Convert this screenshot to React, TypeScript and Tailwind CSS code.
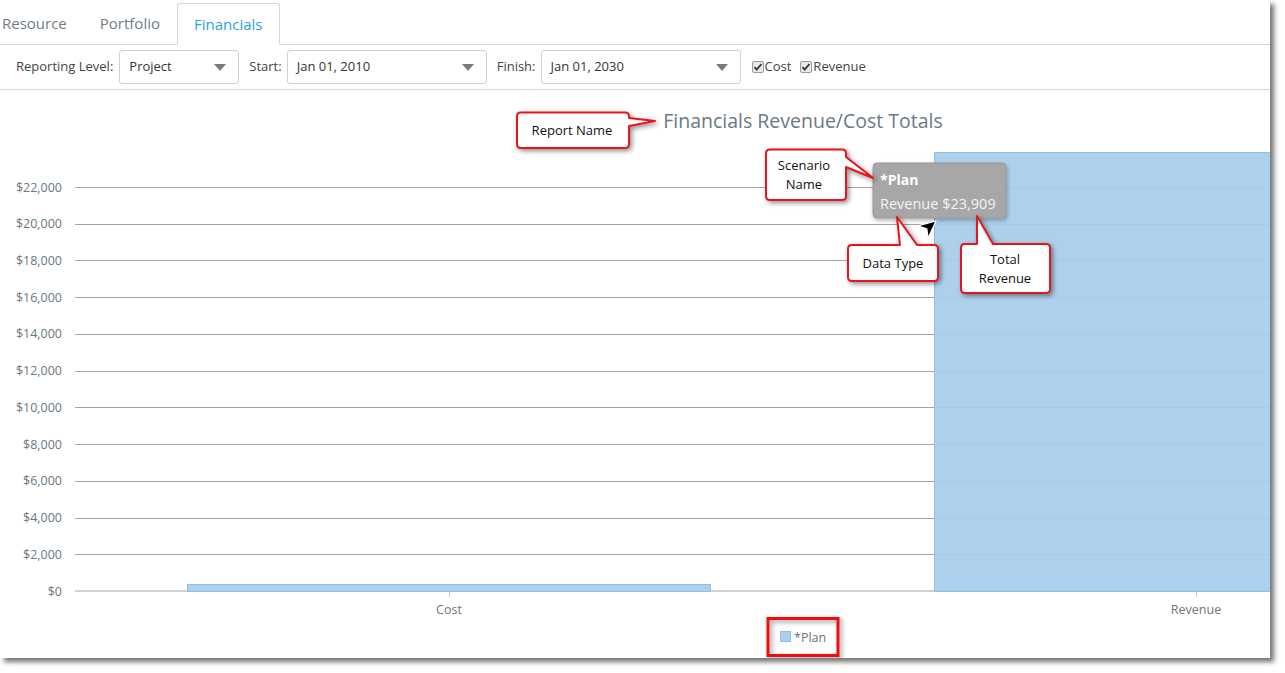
import React from 'react';

const FONT = { fontFamily: '"Open Sans", "Noto Sans", sans-serif' };

const yFor = (v: number) => 591 - (v / 2000) * 36.727;
const ticks = [0, 2000, 4000, 6000, 8000, 10000, 12000, 14000, 16000, 18000, 20000, 22000];

function Caret() {
  return (
    <svg width="12" height="7" viewBox="0 0 12 7" className="shrink-0">
      <path d="M0 0h12L6 7z" fill="#7a7a7a" />
    </svg>
  );
}

function Select({ value, width }: { value: string; width: string }) {
  return (
    <div
      className={`${width} h-[34px] flex items-center justify-between pl-[9px] pr-[12px] border border-[#d0d0d0] rounded-[3px] bg-white text-[13px] text-[#333]`}
    >
      <span>{value}</span>
      <Caret />
    </div>
  );
}

function Check({ label }: { label: string }) {
  return (
    <label className="flex items-center text-[13px] text-[#444]">
      <svg width="12" height="12" viewBox="0 0 12 12" className="mr-[1px]">
        <rect x="0.5" y="0.5" width="11" height="11" rx="1.5" fill="#e9e9e9" stroke="#9a9a9a" />
        <path d="M2.5 6.2l2.2 2.4 4.8-5.6" fill="none" stroke="#333" strokeWidth="1.8" />
      </svg>
      {label}
    </label>
  );
}

// callout box with tail, coordinates in page space
function Callout({ d, lines, x, y }: { d: string; lines: string[]; x: number; y: number }) {
  return (
    <g>
      <path d={d} fill="#fff" stroke="#e8141c" strokeWidth="2" strokeLinejoin="round" filter="url(#cs)" />
      {lines.map((l, i) => (
        <text key={i} x={x} y={y + i * 19} textAnchor="middle" fontSize="13" fill="#111">
          {l}
        </text>
      ))}
    </g>
  );
}

function Chart() {
  return (
    <svg width="1270" height="568" viewBox="0 90 1270 568" className="block" style={FONT}>
      <defs>
        <filter id="cs" x="-30%" y="-30%" width="160%" height="160%">
          <feDropShadow dx="2" dy="2" stdDeviation="2.5" floodColor="#000" floodOpacity="0.45" />
        </filter>
        <filter id="ts" x="-20%" y="-20%" width="140%" height="150%">
          <feDropShadow dx="1" dy="2" stdDeviation="2" floodColor="#000" floodOpacity="0.3" />
        </filter>
      </defs>

      <text x="803" y="128" textAnchor="middle" fontSize="19.5" fill="#6c7884">
        Financials Revenue/Cost Totals
      </text>

      {/* grid */}
      {ticks.map((t) => (
        <g key={t}>
          {t === 0 ? (
            <line x1="75" x2="1270" y1={591} y2={591} stroke="#d2d2d2" strokeWidth="2" />
          ) : (
            <line x1="75" x2="1270" y1={Math.round(yFor(t)) + 0.5} y2={Math.round(yFor(t)) + 0.5} stroke="#a4a4a4" />
          )}
          <text x="62" y={yFor(t) + 4.5} textAnchor="end" fontSize="12.5" fill="#6a7680">
            {'$' + t.toLocaleString('en-US')}
          </text>
        </g>
      ))}

      {/* bars */}
      <rect x="187.5" y="584.5" width="523" height="7" fill="#abd0ed" stroke="#8fbee6" />
      <rect x="934.5" y="152.5" width="340" height="439" fill="#a6cdec" fillOpacity="0.92" stroke="#8fbee6" />

      <line x1="449.5" x2="449.5" y1="592" y2="597" stroke="#c8c8c8" />
      <line x1="1196.5" x2="1196.5" y1="592" y2="597" stroke="#c8c8c8" />
      <text x="449" y="614" textAnchor="middle" fontSize="12.5" fill="#6a7680">Cost</text>
      <text x="1196" y="614" textAnchor="middle" fontSize="12.5" fill="#6a7680">Revenue</text>

      {/* legend */}
      <rect x="780.5" y="631.5" width="10" height="10" fill="#abd0ed" stroke="#8fbee6" />
      <text x="794" y="642" fontSize="12.5" fill="#6a7680">*Plan</text>
      <rect x="768" y="618.5" width="70" height="37" fill="none" stroke="#ee1111" strokeWidth="3" filter="url(#cs)" />

      {/* tooltip */}
      <rect x="873" y="163" width="133" height="55" rx="4" fill="#a7a7a7" stroke="#979797" filter="url(#ts)" />
      <text x="880" y="185" fontSize="14" fontWeight="700" fill="#fff">*Plan</text>
      <text x="880" y="209" fontSize="14.5" fill="#f4f4f4">Revenue $23,909</text>

      {/* cursor */}
      <g transform="translate(936 221) rotate(50)">
        <path d="M0 0 L8 17 L0 12 L-8 17 Z" fill="#000" stroke="#fff" strokeWidth="1.2" strokeLinejoin="round" />
      </g>

      <Callout
        d="M521 112.5 H625 Q629 112.5 629 116.5 V118 L655 121 L629 126 V144 Q629 148 625 148 H521 Q517 148 517 144 V116.5 Q517 112.5 521 112.5 Z"
        lines={['Report Name']}
        x={572}
        y={135}
      />
      <Callout
        d="M770 149.5 H842 Q846 149.5 846 153.5 V157 L873 178 L846 167 V196 Q846 200 842 200 H770 Q766 200 766 196 V153.5 Q766 149.5 770 149.5 Z"
        lines={['Scenario', 'Name']}
        x={804}
        y={170}
      />
      <Callout
        d="M852 245 H900 L897 217 L917 245 H934 Q938 245 938 249 V277 Q938 281 934 281 H852 Q848 281 848 277 V249 Q848 245 852 245 Z"
        lines={['Data Type']}
        x={893}
        y={268}
      />
      <Callout
        d="M965 244 H977 L977 216 L993 244 H1046 Q1050 244 1050 248 V289 Q1050 293 1046 293 H965 Q961 293 961 289 V248 Q961 244 965 244 Z"
        lines={['Total', 'Revenue']}
        x={1005}
        y={264}
      />
    </svg>
  );
}

export default function App() {
  return (
    <div className="w-[1285px] h-[673px] bg-white" style={FONT}>
      <div className="w-[1270px] h-[658px] bg-white shadow-[4px_4px_5px_rgba(0,0,0,0.55)] flex flex-col overflow-hidden">
        {/* tabs */}
        <div className="h-[45px] flex items-end border-b border-[#d6d6d6] text-[15px] text-[#6f7c87]">
          <div className="h-[42px] flex items-center pl-[2px] pr-[33px]">Resource</div>
          <div className="h-[42px] flex items-center pr-[17px]">Portfolio</div>
          <div className="h-[42px] -mb-px flex items-center px-[16px] border border-b-white border-[#d6d6d6] rounded-t-[3px] bg-white text-[#2aa4e0]">
            Financials
          </div>
        </div>

        {/* toolbar */}
        <div className="h-[45px] flex items-center border-b border-[#d6d6d6] pl-[16px] text-[13px] text-[#444]">
          <span className="mr-[6px]">Reporting Level:</span>
          <Select value="Project" width="w-[120px]" />
          <span className="ml-[10px] mr-[5px]">Start:</span>
          <Select value="Jan 01, 2010" width="w-[200px]" />
          <span className="ml-[10px] mr-[5px]">Finish:</span>
          <Select value="Jan 01, 2030" width="w-[200px]" />
          <div className="ml-[11px] flex items-center gap-[9px]">
            <Check label="Cost" />
            <Check label="Revenue" />
          </div>
        </div>

        <Chart />
      </div>
    </div>
  );
}
